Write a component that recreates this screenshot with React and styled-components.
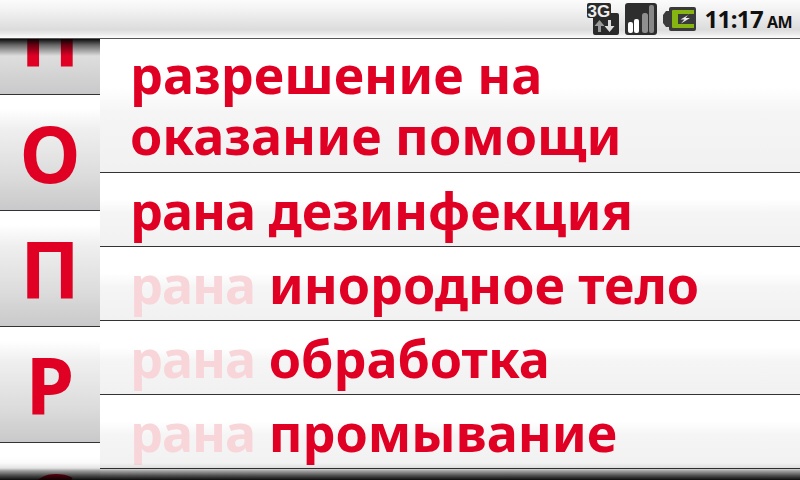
import React from "react";
import styled, { createGlobalStyle } from "styled-components";

const Global = createGlobalStyle`
  html, body { margin: 0; padding: 0; width: 800px; height: 480px; overflow: hidden; background: #fff; }
`;

const Screen = styled.div`
  position: relative; width: 800px; height: 480px; overflow: hidden;
  display: flex; flex-direction: column;
  font-family: "Noto Sans", "Open Sans", sans-serif;
`;

const StatusBar = styled.div`
  height: 38px; flex: none; box-sizing: border-box;
  background: linear-gradient(#fbfbfb 0%, #f3f3f3 25%, #dcdcdc 78%, #e8e8e8 88%, #fdfdfd 100%);
  display: flex; justify-content: flex-end; align-items: center; padding-right: 8px; gap: 6px;
`;

const Clock = styled.div`
  font-weight: 700; color: #111; font-size: 24px; line-height: 1;
  margin-left: 2px; white-space: nowrap; letter-spacing: -0.6px;
  span { font-size: 16px; margin-left: 4px; }
`;

const Main = styled.div`
  flex: 1; min-height: 0; display: flex; border-top: 1px solid #555; overflow: hidden;
`;

const Alphabet = styled.div`
  width: 100px; flex: none; overflow: hidden;
`;

const Cell = styled.div`
  height: 115px; flex: none; border-bottom: 1px solid #333;
  background: linear-gradient(#fff 0%, #fff 12%, #efefef 30%, #dcdcdc 70%, #c9c9cb 100%);
  display: flex; align-items: center; justify-content: center;
  color: #df0024; font-weight: 700; font-size: 78px; line-height: 1;
  &:first-child { margin-top: ${(p) => p.$offset || 0}px; }
`;

const List = styled.div`
  flex: 1; min-width: 0; display: flex; flex-direction: column;
`;

const Row = styled.div`
  height: ${(p) => (p.$tall ? 134 : 74)}px; flex: none; box-sizing: border-box;
  border-bottom: 1px solid #333;
  background: linear-gradient(#fff 0%, #fff 36%, #f5f5f5 55%, #f1f1f1 100%);
  padding: 0 0 ${(p) => (p.$tall ? 3 : 0)}px 30px; display: flex; align-items: center;
  color: #df0024; font-weight: 700; font-size: 52px; line-height: 61px; white-space: nowrap;
`;

const Prefix = styled.span`
  letter-spacing: -1px;
  color: ${(p) => (p.$faded ? "#f8d5d9" : "inherit")};
`;

const TopShade = styled.div`
  position: absolute; left: 0; top: 39px; width: 100px; height: 17px;
  background: linear-gradient(rgba(0,0,0,0.95), rgba(0,0,0,0.55) 35%, rgba(0,0,0,0));
`;

const BottomShade = styled.div`
  position: absolute; left: 0; bottom: 0; width: 100%; height: 17px;
  background: linear-gradient(rgba(0,0,0,0), rgba(0,0,0,0.08) 30%, rgba(0,0,0,0.35) 45%, rgba(0,0,0,0.7) 75%, rgba(0,0,0,0.95));
`;

const Net3G = () => (
  <svg width="32" height="32" viewBox="0 0 32 32">
    <path d="M2 0h20a2 2 0 0 1 2 2v8h6a2 2 0 0 1 2 2v18a2 2 0 0 1-2 2H8a2 2 0 0 1-2-2V15H2a2 2 0 0 1-2-2V2a2 2 0 0 1 2-2z" fill="#2a2a2a" />
    <text x="0.5" y="14" fontFamily="Liberation Sans" fontWeight="700" fontSize="17" fill="#eee">3G</text>
    <path d="M11 29v-6H7.5l5-6 5 6H14v6z" fill="#9a9a9a" />
    <path d="M21 17v6h-3.5l5 6 5-6H24v-6z" fill="#ddd" />
  </svg>
);

const Signal = () => (
  <svg width="32" height="32" viewBox="0 0 32 32">
    <rect x="0" y="0" width="32" height="32" rx="3" fill="#2e2e2e" />
    <rect x="3" y="19" width="5" height="11" rx="2" fill="#fff" />
    <rect x="9" y="16" width="5" height="14" rx="2" fill="#fff" />
    <rect x="17" y="10" width="6" height="20" rx="2.5" fill="#8f8f8f" />
    <rect x="24" y="2" width="5" height="28" rx="2" fill="#888" />
  </svg>
);

const Battery = () => (
  <svg width="33" height="24" viewBox="0 0 33 24">
    <path d="M8 0h23a2 2 0 0 1 2 2v20a2 2 0 0 1-2 2H8a2 2 0 0 1-2-2v-2H3l-3-4V8l3-4h3V2a2 2 0 0 1 2-2z" fill="#3a3a3a" />
    <path d="M10 3h21v4H15v10h16v4H10a1 1 0 0 1-1-1V4a1 1 0 0 1 1-1z" fill="#86b410" />
    <path d="M26 7.500l-8.500 5h4l-3.500 4 9-5.500h-4.500l3-3.500z" fill="#eee" />
  </svg>
);

export default function App() {
  return (
    <Screen>
      <Global />
      <StatusBar>
        <Net3G />
        <Signal />
        <Battery />
        <Clock>11:17<span>AM</span></Clock>
      </StatusBar>
      <Main>
        <Alphabet>
          <Cell $offset={-60}>П</Cell>
          <Cell>О</Cell>
          <Cell>П</Cell>
          <Cell>Р</Cell>
          <Cell>С</Cell>
        </Alphabet>
        <List>
          <Row $tall><div>разрешение на<br />оказание помощи</div></Row>
          <Row><span><Prefix>рана</Prefix> дезинфекция</span></Row>
          <Row><span><Prefix $faded>рана</Prefix> инородное тело</span></Row>
          <Row><span><Prefix $faded>рана</Prefix> обработка</span></Row>
          <Row><span><Prefix $faded>рана</Prefix> промывание</span></Row>
        </List>
      </Main>
      <TopShade />
      <BottomShade />
    </Screen>
  );
}
